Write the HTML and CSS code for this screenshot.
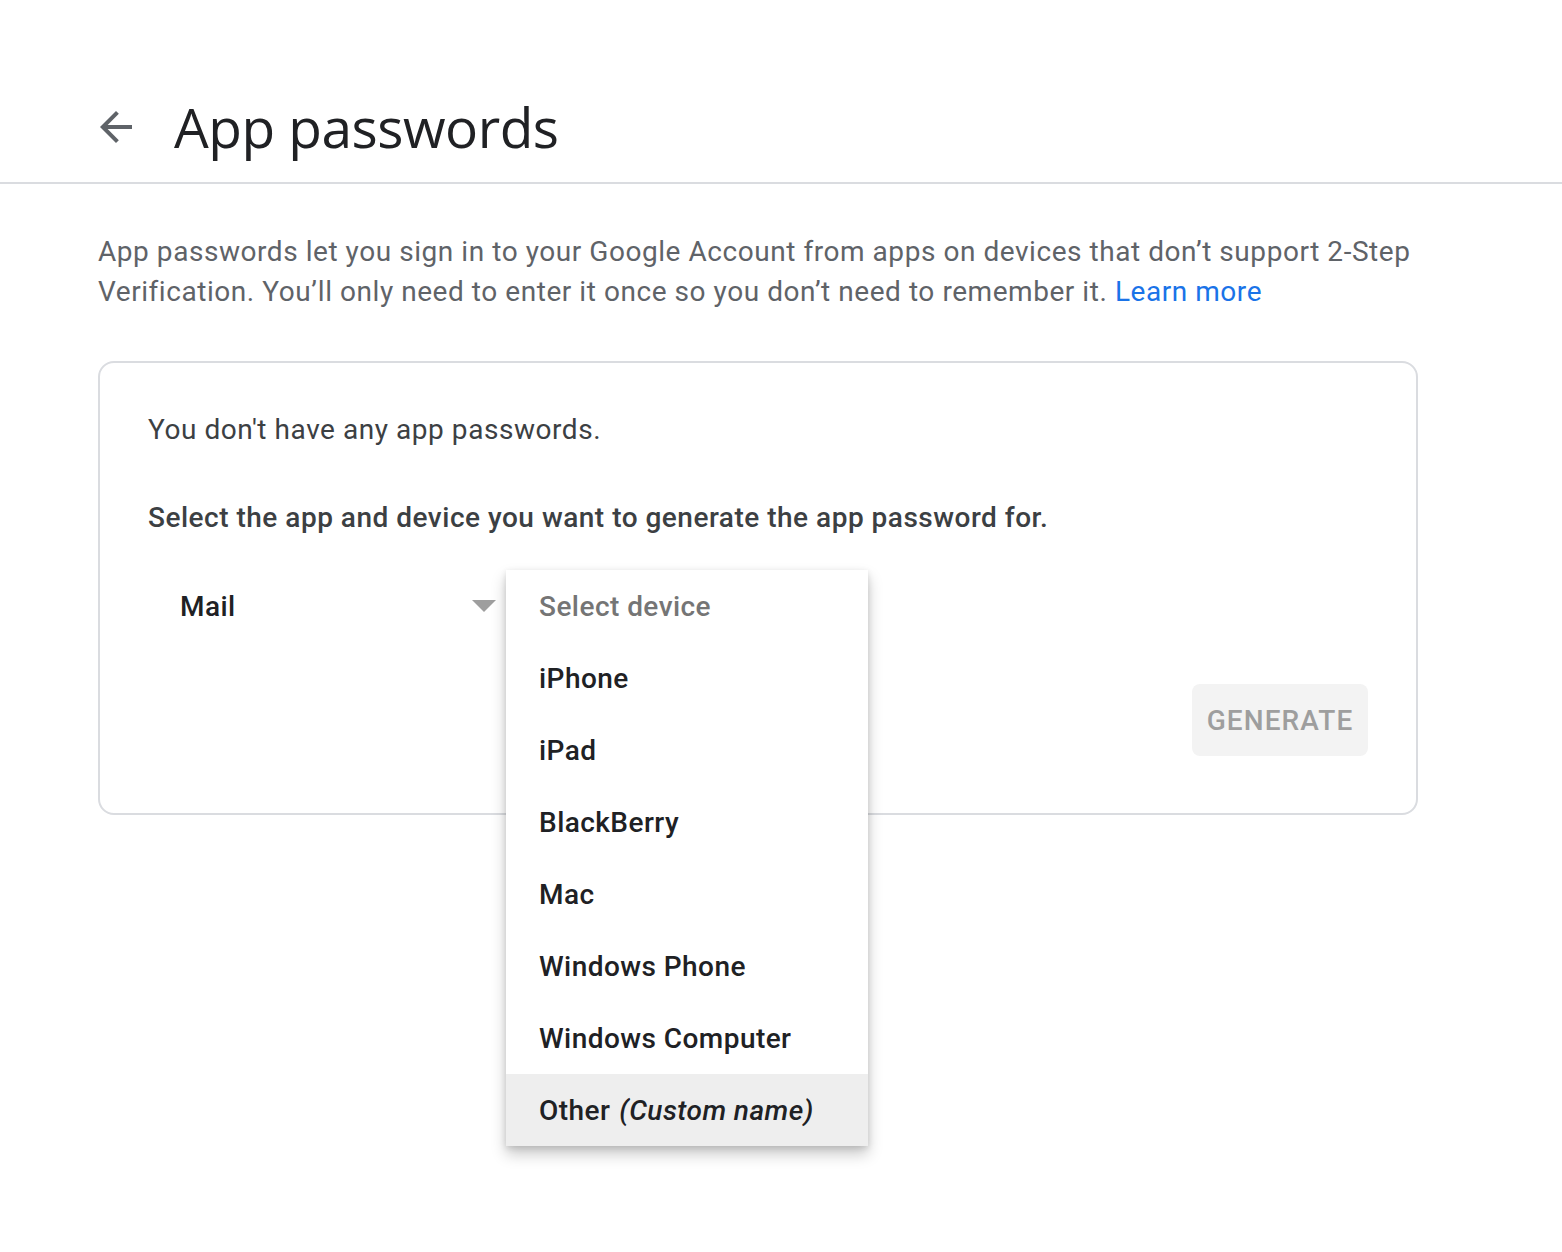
FILE: index.html
```html
<!DOCTYPE html>
<html lang="en">
<head>
<meta charset="utf-8">
<title>App passwords</title>
<link rel="stylesheet" href="styles.css">
</head>
<body>
<header class="header">
  <button class="back" aria-label="Back">
    <svg width="48" height="48" viewBox="0 0 24 24"><path d="M20 11H7.83l5.59-5.59L12 4l-8 8 8 8 1.41-1.41L7.83 13H20v-2z" fill="#5f6368"/></svg>
  </button>
  <h1 class="title">App passwords</h1>
</header>
<main class="main">
  <p class="desc">App passwords let you sign in to your Google Account from apps on devices that don’t support 2-Step Verification. You’ll only need to enter it once so you don’t need to remember it. <a class="link" href="#">Learn more</a></p>
  <div class="card">
    <p class="empty">You don't have any app passwords.</p>
    <p class="prompt">Select the app and device you want to generate the app password for.</p>
    <div class="selects">
      <div class="select app">
        <span class="select-value">Mail</span>
        <span class="caret"></span>
      </div>
      <div class="select device">
        <ul class="menu">
          <li class="item placeholder">Select device</li>
          <li class="item">iPhone</li>
          <li class="item">iPad</li>
          <li class="item">BlackBerry</li>
          <li class="item">Mac</li>
          <li class="item">Windows Phone</li>
          <li class="item">Windows Computer</li>
          <li class="item active">Other <em class="custom">(Custom name)</em></li>
        </ul>
      </div>
    </div>
    <div class="actions">
      <button class="generate" disabled>GENERATE</button>
    </div>
  </div>
</main>
</body>
</html>
```

FILE: styles.css
```css
* { box-sizing: border-box; }
html, body { margin: 0; padding: 0; background: #fff; }
html { min-height: 100%; }
body { min-height: 1252px; font-family: Roboto, "Noto Sans", sans-serif; color: #202124; }

.header {
  display: flex;
  align-items: center;
  height: 184px;
  padding-left: 92px;
  padding-top: 71px;
  border-bottom: 2px solid #dadce0;
}
.back {
  width: 48px; height: 48px; padding: 0; border: 0; background: none;
  display: flex; align-items: center; justify-content: center;
  margin-right: 34px;
}
.title {
  margin: 0;
  font-family: "Open Sans", sans-serif;
  font-weight: 400;
  font-size: 55px;
  letter-spacing: -0.5px;
  color: #202124;
  line-height: 1;
}

.main { padding: 48px 0 0 98px; width: 1418px; }
.desc {
  margin: 0;
  font-size: 28px;
  line-height: 40px;
  letter-spacing: 0.55px;
  color: #5f6368;
}
.link { color: #1a73e8; text-decoration: none; }

.card {
  position: relative;
  margin-top: 49px;
  border: 2px solid #dadce0;
  border-radius: 16px;
  padding: 47px 48px 57px 48px;
}
.empty {
  margin: 0;
  font-size: 28px; line-height: 40px; letter-spacing: 0.55px;
  color: #3c4043;
}
.prompt {
  margin: 48px 0 0;
  font-size: 28px; line-height: 40px; letter-spacing: 0.5px;
  font-weight: 500;
  color: #3c4043;
}
.selects { position: relative; z-index: 3; display: flex; margin-top: 32px; height: 72px; }
.select { position: relative; height: 72px; display: flex; align-items: center; }
.app { width: 358px; padding-left: 32px; padding-right: 10px; }
.select-value { flex: 1; font-size: 28px; font-weight: 500; letter-spacing: 0.45px; color: #202124; }
.caret {
  width: 0; height: 0;
  border-left: 12px solid transparent;
  border-right: 12px solid transparent;
  border-top: 12px solid #9e9e9e;
}
.device { width: 362px; }
.menu {
  position: absolute; left: 0; top: 0;
  width: 362px;
  margin: 0; padding: 0; list-style: none;
  background: #fff;
  box-shadow: 0 8px 14px rgba(0,0,0,0.22), 0 2px 6px rgba(0,0,0,0.12);
  z-index: 5;
}
.item {
  height: 72px; display: flex; align-items: center;
  padding-left: 33px;
  font-size: 28px; font-weight: 500; letter-spacing: 0.45px;
  color: #202124;
}
.placeholder { color: #757575; }
.active { background: #eeeeee; }
.custom { font-style: italic; margin-left: 9px; }

.actions { display: flex; justify-content: flex-end; margin-top: 42px; }
.generate {
  width: 176px; height: 72px;
  border: 0; border-radius: 8px;
  background: #f3f3f3;
  color: #9e9e9e;
  font-family: Roboto, sans-serif;
  font-size: 28px; font-weight: 500; letter-spacing: 1.1px;
  padding: 0;
}
```
